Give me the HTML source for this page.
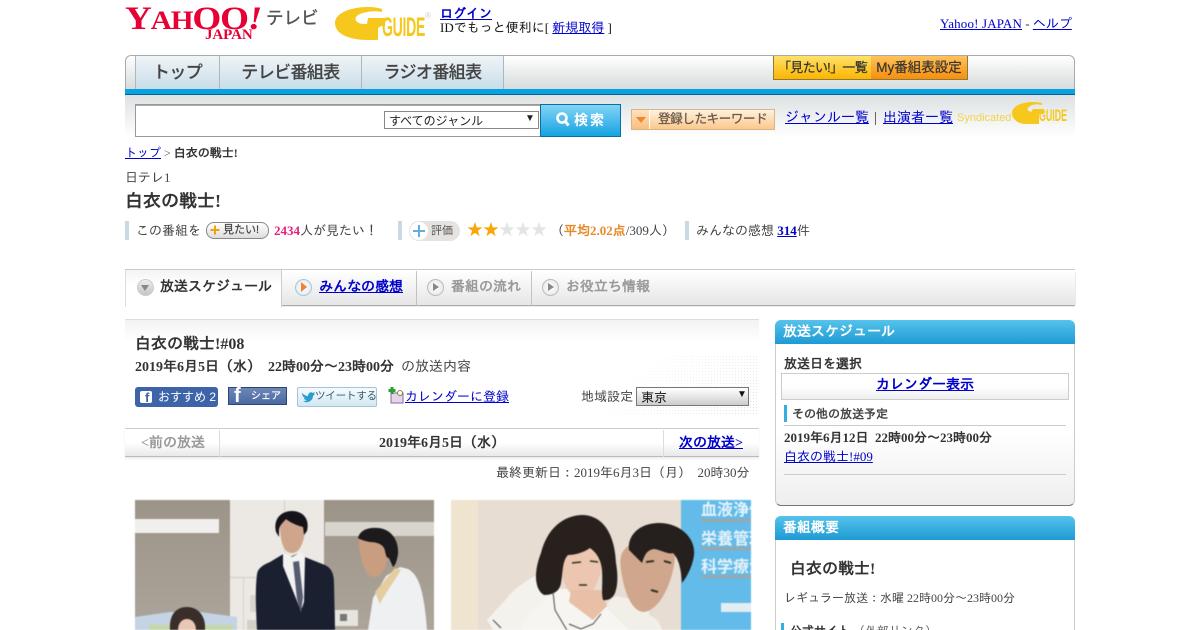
<!DOCTYPE html>
<html lang="ja"><head><meta charset="utf-8"><title>白衣の戦士!</title>
<style>
html,body{margin:0;padding:0;width:1200px;height:630px;overflow:hidden;background:#fff}
body{position:relative;font-family:"Liberation Serif","IPAGothic",serif;font-size:13px;color:#333}
.a{position:absolute;white-space:nowrap}
.g{font-family:"Liberation Sans","Noto Sans CJK JP",sans-serif}
a{color:#00c;text-decoration:underline}
.b{font-weight:bold}
svg{position:absolute;display:block}
.tab{position:absolute;top:56px;height:33px;box-sizing:border-box;background:linear-gradient(#f0f4f7,#c9dde9);border-right:1px solid #a9b9c2;font:500 17px/33px "Liberation Sans","Noto Sans CJK JP",sans-serif;color:#444;text-align:center;letter-spacing:-.6px;-webkit-text-stroke:.15px #444}
.bar{position:absolute;width:4px;height:19px;background:#c9d9e6}
.head{position:absolute;left:775px;width:300px;height:24px;background:linear-gradient(#55c3ec,#1e9ad4);border-radius:6px 6px 0 0;color:#fff;font:bold 14px/26px "Liberation Serif","IPAGothic",serif;text-indent:8px}
.tb{position:absolute;top:271px;height:34px;background:linear-gradient(#fff,#e6e6e6);border-right:1px solid #ccc;box-shadow:0 1px 1px #999}
.tt{position:absolute;top:278px;font:bold 14px/20px "Liberation Serif","IPAGothic",serif;white-space:nowrap}
.ci{position:absolute;width:15px;height:15px;border-radius:50%;border:1px solid #bbb;background:radial-gradient(#fff,#e4e4e4);top:279px}
.ci:after{content:"";position:absolute;left:5px;top:3px;border-left:6px solid #888;border-top:4px solid transparent;border-bottom:4px solid transparent}
</style></head><body>

<!-- Yahoo logo -->
<div class="a b" style="left:125px;top:2px;font-size:33px;line-height:34px;color:#e60033;letter-spacing:-1px;transform:scaleX(1.125);transform-origin:left">Y<span style="font-size:26px">A</span><span style="font-size:26px">H</span>OO<i>!</i></div>
<div class="a b" style="left:205px;top:27px;font-size:15px;line-height:16px;color:#e60033;letter-spacing:-.1px">JAPAN</div>
<div class="a g" style="left:266px;top:8px;font-size:17.5px;line-height:21px;color:#555;-webkit-text-stroke:.4px #555">テレビ</div>

<!-- G-Guide logo -->
<svg style="left:335px;top:6px" width="60" height="36" viewBox="0 0 60 36"><path d="M0 17C0 7 16 1 33 1c6 0 11 1 14 2v3C39 4 28 6 23 9c-4 3-3 6 1 8 2 1 5 1 8 1l1-6h17v8h-4l-3 2v12c-3 0-6 0-10 0C14 34 0 28 0 17Z" fill="#f6c71d"/></svg>
<div class="a g b" style="left:382px;top:12px;font-size:27px;line-height:30px;color:#f6c71d;transform:scaleX(.52);transform-origin:left;letter-spacing:-.5px">GUIDE</div>
<div class="a g" style="left:425px;top:11px;font-size:8px;line-height:10px;color:#ccc">®</div>

<div class="a b" style="left:440px;top:6px;font-size:13px;line-height:16px"><a href="#">ログイン</a></div>
<div class="a" style="left:440px;top:20px;font-size:13px;line-height:16px;color:#111">IDでもっと便利に[ <a href="#">新規取得</a> ]</div>
<div class="a" style="left:940px;top:16px;font-size:13px;line-height:16px;color:#333"><a href="#" style="letter-spacing:.15px">Yahoo! JAPAN</a> - <a href="#">ヘルプ</a></div>

<!-- Nav -->
<div class="a" style="left:125px;top:55px;width:948px;height:34px;border:1px solid #aaa;border-bottom:0;border-radius:6px 6px 0 0;background:linear-gradient(#fff,#d6dada)"></div>
<div class="tab" style="left:135px;width:85px;border-left:1px solid #a9b9c2">トップ</div>
<div class="tab" style="left:220px;width:142px">テレビ番組表</div>
<div class="tab" style="left:362px;width:142px">ラジオ番組表</div>
<div class="a g" style="left:773px;top:56px;width:97px;height:23px;background:linear-gradient(#ffe26a,#fbb500);border:solid #8d7a3a;border-width:0 1px 1px 1px;font-size:13px;line-height:23px;color:#333;text-align:center;letter-spacing:-.7px;-webkit-text-stroke:.2px #333">「見たい!」一覧</div>
<div class="a g" style="left:871px;top:56px;width:96px;height:23px;background:linear-gradient(#ffc25a,#f78f0c);border:solid #8d7a3a;border-width:0 1px 1px 0;font-size:13.5px;line-height:23px;color:#333;text-align:center;-webkit-text-stroke:.2px #333">My番組表設定</div>
<div class="a" style="left:125px;top:89px;width:950px;height:6px;background:#08a2e2;border-bottom:1px solid #04628c;box-sizing:border-box"></div>
<div class="a" style="left:125px;top:95px;width:950px;height:42px;background:linear-gradient(#dde1e2,#fff)"></div>

<!-- Search -->
<div class="a" style="left:135px;top:104px;width:404px;height:31px;background:#fff;border:1px solid #999;box-shadow:inset 0 1px 0 #aaa"></div>
<div class="a g" style="left:384px;top:111px;width:153px;height:16px;background:#fff;border:1px solid #888;font-size:12px;line-height:18px;color:#222;text-indent:4px">すべてのジャンル<span class="a" style="left:140px;top:-2px;text-indent:0;font-size:10px">▼</span></div>
<div class="a g b" style="left:540px;top:104px;width:79px;height:31px;border:1px solid #0a6f9f;background:linear-gradient(#83d4f5,#16a3e2);color:#fff;font-size:14px;line-height:31px;letter-spacing:2px;text-indent:33px">検索</div>
<svg style="left:555px;top:111px" width="16" height="17" viewBox="0 0 16 17"><circle cx="7" cy="7" r="4.5" fill="none" stroke="#fff" stroke-width="2.6"/><path d="M10 10l3.5 4.5" stroke="#fff" stroke-width="3"/></svg>

<div class="a" style="left:631px;top:109px;width:142px;height:19px;border:1px solid #d9b48a;background:linear-gradient(#fff1dd,#fbc88e)"></div>
<div class="a" style="left:632px;top:110px;width:17px;height:19px;background:linear-gradient(#ffe2bf,#fbbe7d);border-right:1px solid #fff"></div>
<div class="a" style="left:636px;top:117px;border-top:6px solid #e88c2a;border-left:5px solid transparent;border-right:5px solid transparent"></div>
<div class="a g" style="left:658px;top:111px;font-size:12.5px;line-height:17px;color:#6b5a48;letter-spacing:-.35px;-webkit-text-stroke:.3px #6b5a48">登録したキーワード</div>
<div class="a" style="left:785px;top:110px;font-size:14px;line-height:17px"><a href="#">ジャンル一覧</a></div>
<div class="a" style="left:875px;top:112px;width:1px;height:13px;background:#666"></div>
<div class="a" style="left:883px;top:110px;font-size:14px;line-height:17px"><a href="#">出演者一覧</a></div>
<div class="a g" style="left:957px;top:112px;font-size:11px;line-height:12px;color:#f0d44a">Syndicated</div>
<svg style="left:1012px;top:102px" width="38" height="22" viewBox="0 0 38 22"><path d="M0 11C0 4 10 0 21 0c5 0 8 1 9 1v2c-5-1-9-1-12 1-3 2-3 4-1 5l2 1 2-3h11v5h-5v10H14C6 22 0 17 0 11Z" fill="#f6c71d"/></svg>
<div class="a g b" style="left:1039px;top:106px;font-size:17px;line-height:19px;color:#f6c71d;transform:scaleX(.52);transform-origin:left">GUIDE</div>

<!-- Title area -->
<div class="a" style="left:125px;top:145px;font-size:12px;line-height:16px;color:#555"><a href="#">トップ</a> &gt; <span class="b" style="color:#333">白衣の戦士!</span></div>
<div class="a" style="left:125px;top:169px;font-size:13px;line-height:17px;color:#444">日テレ1</div>
<div class="a b" style="left:125px;top:189px;font-size:18px;line-height:24px;color:#333">白衣の戦士!</div>

<div class="bar" style="left:125px;top:221px"></div>
<div class="a" style="left:136px;top:222px;font-size:13px;line-height:17px;color:#444">この番組を</div>
<div class="a g" style="left:206px;top:222px;width:61px;height:15px;border:1px solid #888;border-radius:8px;background:linear-gradient(#fff,#ddd);font-size:11px;line-height:15px;color:#444;text-indent:16px;-webkit-text-stroke:.2px #444">見たい!</div>
<svg style="left:209px;top:224px" width="12" height="12" viewBox="0 0 12 12"><path d="M6 1.500v9M1.500 6h9" stroke="#f2a10f" stroke-width="2"/></svg>
<div class="a" style="left:274px;top:222px;font-size:13px;line-height:17px;color:#444"><span class="b" style="color:#e6207c">2434</span>人が見たい！</div>

<div class="bar" style="left:398px;top:221px"></div>
<div class="a" style="left:409px;top:221px;width:51px;height:20px;border-radius:10px;background:#e6e2df"></div>
<div class="a" style="left:410px;top:222px;width:18px;height:18px;border-radius:50%;background:#fff"></div>
<svg style="left:410px;top:222px" width="18" height="18" viewBox="0 0 18 18"><path d="M9 3v12M3 9h12" stroke="#5fb0e0" stroke-width="2"/></svg>
<div class="a g" style="left:431px;top:223px;font-size:11px;line-height:16px;color:#555">評価</div>
<div class="a g" style="left:467px;top:222px;font-size:16px;line-height:18px;color:#f9a608">★★<span style="color:#e4e4e4">★★★</span></div>
<div class="a" style="left:551px;top:222px;font-size:13px;line-height:17px;color:#444">（<span class="b" style="color:#e88a2a">平均2.02点</span>/309人）</div>

<div class="bar" style="left:685px;top:221px"></div>
<div class="a" style="left:696px;top:222px;font-size:13px;line-height:17px;color:#444">みんなの感想 <a class="b" href="#">314</a>件</div>

<!-- Tabs -->
<div class="a" style="left:125px;top:269px;width:950px;height:1px;background:#ccc"></div>
<div class="tb" style="left:282px;width:134px"></div>
<div class="tb" style="left:417px;width:114px"></div>
<div class="tb" style="left:532px;width:543px;border-right:0"></div>
<div class="a" style="left:125px;top:270px;width:157px;height:37px;background:linear-gradient(#f3f3f3,#fff 40%);border-right:1px solid #ccc;border-left:1px solid #ddd;box-sizing:border-box"></div>
<div class="a" style="left:137px;top:279px;width:15px;height:15px;border-radius:50%;border:1px solid #ccc;background:linear-gradient(#eee,#c4c4c4)"></div>
<div class="a" style="left:141px;top:285px;border-top:6px solid #888;border-left:4px solid transparent;border-right:4px solid transparent"></div>
<div class="tt" style="left:160px;color:#333">放送スケジュール</div>
<div class="ci" style="left:295px;border-color:#9ccbe0"></div><div class="a" style="left:301px;top:282px;border-left:6px solid #e8843a;border-top:5px solid transparent;border-bottom:5px solid transparent"></div>
<div class="tt" style="left:319px"><a href="#">みんなの感想</a></div>
<div class="ci" style="left:427px"></div><div class="tt" style="left:451px;color:#999">番組の流れ</div>
<div class="ci" style="left:542px"></div><div class="tt" style="left:566px;color:#999">お役立ち情報</div>

<!-- Main -->
<div class="a" style="left:125px;top:319px;width:634px;height:22px;border-top:1px solid #ddd;background:linear-gradient(#f3f3f3,#fff)"></div>
<div class="a" style="left:560px;top:355px;width:199px;height:60px;background-image:radial-gradient(#e2e2e2 .7px,transparent .8px);background-size:3px 3px;-webkit-mask-image:linear-gradient(135deg,transparent 30%,#000 100%);mask-image:linear-gradient(135deg,transparent 30%,#000 100%)"></div>
<div class="a b" style="left:135px;top:334px;font-size:16px;line-height:21px;color:#333">白衣の戦士!#08</div>
<div class="a" style="left:135px;top:358px;font-size:14px;line-height:19px;color:#444"><span class="b" style="color:#333">2019年6月5日（水）&nbsp;&nbsp;22時00分～23時00分</span>&nbsp;&nbsp;の放送内容</div>

<div class="a g" style="left:135px;top:387px;width:83px;height:20px;border-radius:3px;background:#3d63a8;color:#fff;font-size:12px;line-height:20px;text-indent:23px">おすすめ 2</div>
<div class="a" style="left:140px;top:391px;width:12px;height:12px;border-radius:2px;background:#fff"></div>
<div class="a g b" style="left:145px;top:391px;font-size:13px;line-height:14px;color:#3d63a8">f</div>
<div class="a" style="left:228px;top:387px;width:57px;height:16px;border:1px solid #2c4674;background:linear-gradient(#6d87b5,#4a6aa3)"></div>
<div class="a g b" style="left:234px;top:386px;font-size:20px;line-height:20px;color:#fff">f</div>
<div class="a g" style="left:251px;top:390px;font-size:10px;line-height:13px;color:#fff;-webkit-text-stroke:.2px #fff">シェア</div>
<div class="a" style="left:297px;top:387px;width:78px;height:18px;border:1px solid #a5c4d6;border-radius:2px;background:linear-gradient(#f4fbff,#d3e8f2)"></div>
<div class="a g" style="left:315px;top:389px;font-size:10.5px;line-height:15px;color:#3a5a6a;letter-spacing:-.2px">ツイートする</div>
<svg style="left:301px;top:391px" width="14" height="12" viewBox="0 0 14 12"><path d="M1 2c2 2 4 3 6 3 0-3 3-5 5-3l2-1-1 2 1 0c-1 1-1 1-2 2 0 4-4 7-8 6l-2-1c1 0 3 0 4-1-2 0-3-1-3-2h1C2 6 1 4 1 2Z" fill="#2a9ccf"/></svg>
<svg style="left:388px;top:387px" width="17" height="17" viewBox="0 0 17 17"><rect x="3" y="6" width="12" height="10" fill="#e4d6ea" stroke="#8a6a9a"/><circle cx="12" cy="6" r="2.500" fill="#fff" stroke="#8a7a50"/><path d="M4 0v7M0.500 3.500h7" stroke="#2f9e34" stroke-width="3"/></svg>
<div class="a" style="left:405px;top:388px;font-size:13px;line-height:17px"><a href="#">カレンダーに登録</a></div>
<div class="a" style="left:581px;top:388px;font-size:13px;line-height:17px;color:#444">地域設定</div>
<div class="a" style="left:636px;top:387px;width:111px;height:17px;border:1px solid #777;background:linear-gradient(#fff,#ccc);font-size:13px;line-height:20px;color:#111;text-indent:4px">東京<span class="a" style="left:100px;top:-3px;text-indent:0;font-size:10px">▼</span></div>

<div class="a" style="left:125px;top:428px;width:634px;height:29px;border-top:1px solid #ccc;border-bottom:1px solid #bbb;background:linear-gradient(#fff 50%,#e9e9e9);box-sizing:border-box;box-shadow:0 2px 2px #eee"></div>
<div class="a" style="left:219px;top:430px;width:1px;height:27px;background:#ddd"></div>
<div class="a" style="left:663px;top:430px;width:1px;height:27px;background:#ddd"></div>
<div class="a b" style="left:141px;top:435px;font-size:14px;line-height:18px;color:#999">&lt;前の放送</div>
<div class="a b" style="left:379px;top:435px;font-size:14px;line-height:18px;color:#333">2019年6月5日（水）</div>
<div class="a b" style="left:679px;top:435px;font-size:14px;line-height:18px"><a href="#">次の放送&gt;</a></div>
<div class="a" style="left:496px;top:464px;font-size:13px;line-height:17px;color:#444">最終更新日：2019年6月3日（月）&nbsp;&nbsp;20時30分</div>

<!-- Photo 1 -->
<svg style="left:135px;top:500px;filter:blur(.5px)" width="299" height="130" viewBox="0 0 299 130">
<defs><linearGradient id="w" x1="0" y1="0" x2="0" y2="1"><stop offset="0" stop-color="#9d9488"/><stop offset="1" stop-color="#aca59b"/></linearGradient></defs>
<rect width="299" height="130" fill="url(#w)"/>
<rect x="95" width="94" height="130" fill="#ece9e4"/><rect x="95" y="77" width="94" height="1" fill="#cfcbc4"/><rect x="149" width="1" height="77" fill="#d5d1ca"/><rect x="108" y="78" width="1" height="52" fill="#d5d1ca"/>
<rect y="19" width="84" height="14" fill="#f0efed"/><rect x="190" y="22" width="109" height="14" fill="#d8d5cf"/>
<rect x="115" y="95" width="8" height="17" fill="#d8d5ce"/><rect x="112" y="120" width="14" height="10" fill="#d4d0c8"/>
<rect x="200" y="110" width="23" height="16" fill="#e6e4de"/><rect x="205" y="114" width="7" height="7" fill="#777"/>
<path d="M0 117l35-5h30l37 5v13H0Z" fill="#c4d4e4"/><path d="M14 125h30v5H14ZM68 125h30v5H68Z" fill="#c5d8a8"/>
<path d="M35 130c-1-14 5-23 17-23s19 10 18 23Z" fill="#3a2e2a"/><path d="M43 130c0-7 4-11 9-11s9 4 9 11Z" fill="#e9c7b4"/>
<path d="M122 130c-1-20-2-40 0-56 1-6 6-9 13-12l15-9 5 4 7-3 28 11c6 3 9 8 9 18l1 47Z" fill="#1b2030"/>
<path d="M148 52l9 5 9-5 4 5-1 45-2 6-3-2-16-40Z" fill="#f2f2f2"/><path d="M158 62l6-1 4 36-2 16-4-14Z" fill="#565c70"/>
<path d="M145 30c-1-9 4-13 12-13s14 4 13 13c-1 12-5 23-13 23s-11-10-12-23Z" fill="#cfa68c"/>
<path d="M141 32c-3-13 5-21 16-21 11 0 18 8 15 20l-3 4-1-8c-5-1-14-5-17-8-3 4-7 6-7 12v6Z" fill="#16141a"/>
<path d="M233 130l5-32 13-22 14-9 8 2c11 6 16 22 19 61Z" fill="#eff0f2"/><path d="M240 92l20-24 6 2-18 28-3 6Z" fill="#e4cd9f"/>
<path d="M224 46c-1-8 3-14 10-13 10 0 19 6 19 17 0 14-5 27-14 27-8 0-13-14-15-31Z" fill="#c99d80"/>
<path d="M223 38c2-8 10-11 20-10 13 1 21 12 20 26-1 7-3 12-5 13l-4-9c-3 0-3-3-4-7-1-6-7-9-15-9-5-1-9-2-12-4Z" fill="#1c1a1c"/>
</svg>

<!-- Photo 2 -->
<svg style="left:451px;top:500px;filter:blur(.5px)" width="300" height="130" viewBox="0 0 300 130">
<rect width="300" height="130" fill="#e8ddd2"/><rect width="27" height="130" fill="#efe4d0"/>
<rect x="230" width="70" height="130" fill="#62bbe9"/>
<rect x="250" y="19" width="50" height="3" fill="#9aa7ac"/><rect x="250" y="47" width="50" height="3" fill="#9aa7ac"/><rect x="250" y="75" width="50" height="3" fill="#9aa7ac"/>
<g font-family="Liberation Sans,Noto Sans CJK JP,sans-serif" font-size="16" font-weight="bold" fill="#e6f3fa"><text x="250" y="15">血液浄化</text><text x="250" y="44">栄養管理</text><text x="250" y="72">科学療法</text></g>
<rect x="270" y="103" width="30" height="9" fill="#e3edf2"/>
<path d="M155 130c-4-15-2-28 10-34l30 6 4 14c8 2 10 8 12 14Z" fill="#f2efe8"/>
<path d="M170 70c-3-18 5-24 12-26l28-8c10 0 15 10 14 22-2 22-14 52-31 54-12 0-20-20-23-42Z" fill="#d0a78c"/>
<path d="M178 50c-2-14 10-27 30-27 22 0 37 16 35 32-1 10-7 22-12 28-1-14-3-24-9-30-4 2-12-3-19-4-8 1-10 8-12 14Z" fill="#25201e"/>
<path d="M36 120l20-22c8-10 24-22 39-26l16 18-4 40H42Z" fill="#f4f2ec"/>
<path d="M77 115l30-26h30l40 40v1H68Z" fill="#f7f5f1"/>
<path d="M109 62c0-14 10-20 22-20 13 0 20 9 20 20-1 18-10 36-21 36-13 0-20-18-21-36Z" fill="#ecc6b0"/>
<path d="M120 90l30 0 6 16-14 14-24-18Z" fill="#e8c0a8"/>
<path d="M93 95c-9-5-11-22-3-42 6-24 22-38 42-38 22 1 32 22 33 48 2 12 2 22-1 30-2 5-7 8-12 7-2-10 0-14-1-30-1-10-5-17-12-22-7 5-16 7-22 7-6 6-5 18-7 28-1 6-5 12-17 12Z" fill="#27201d"/>
<path d="M102 92l2 18 13 22M150 114l-8 10-12 5-12-5" fill="none" stroke="#4a4a4a" stroke-width="1"/>
<path d="M42 120l8 8" fill="none" stroke="#444" stroke-width="1"/>
<path d="M121 63l9-1M139 61l8 1M128 85h8" stroke="#332" stroke-width="1.500"/>
<path d="M195 62l8-1M213 61l7 2M200 90l7 2" stroke="#332" stroke-width="2"/>
</svg>

<!-- Sidebar -->
<div class="a" style="left:775px;top:320px;width:298px;height:184px;border:1px solid #ccc;border-bottom:1px solid #777;border-radius:6px;background:linear-gradient(#fff 60%,#eee)"></div>
<div class="head" style="top:320px">放送スケジュール</div>
<div class="a b" style="left:784px;top:356px;font-size:13px;line-height:16px;color:#333">放送日を選択</div>
<div class="a b" style="left:781px;top:373px;width:286px;height:25px;border:1px solid #ccc;background:linear-gradient(#fff 50%,#eee);text-align:center;font-size:14px;line-height:24px"><a href="#">カレンダー表示</a></div>
<div class="a" style="left:784px;top:405px;width:3px;height:17px;background:#36aee0"></div>
<div class="a b" style="left:792px;top:406px;font-size:12px;line-height:16px;color:#444">その他の放送予定</div>
<div class="a" style="left:784px;top:425px;width:282px;height:1px;background:#ccc"></div>
<div class="a b" style="left:784px;top:430px;font-size:13px;line-height:16px;color:#333">2019年6月12日&nbsp;&nbsp;22時00分～23時00分</div>
<div class="a" style="left:784px;top:449px;font-size:13px;line-height:16px"><a href="#">白衣の戦士!#09</a></div>
<div class="a" style="left:784px;top:474px;width:282px;height:1px;background:#ccc"></div>

<div class="a" style="left:775px;top:516px;width:298px;height:120px;border:1px solid #ccc;border-radius:6px;background:#fff"></div>
<div class="head" style="top:516px">番組概要</div>
<div class="a b" style="left:790px;top:559px;font-size:16px;line-height:22px;color:#333">白衣の戦士!</div>
<div class="a" style="left:784px;top:590px;font-size:12px;line-height:16px;color:#444">レギュラー放送：水曜 22時00分～23時00分</div>
<div class="a" style="left:781px;top:623px;width:3px;height:10px;background:#36aee0"></div>
<div class="a b" style="left:790px;top:623px;font-size:12px;line-height:16px;color:#333">公式サイト <span style="font-weight:normal;color:#666">（外部リンク）</span></div>
</body></html>
